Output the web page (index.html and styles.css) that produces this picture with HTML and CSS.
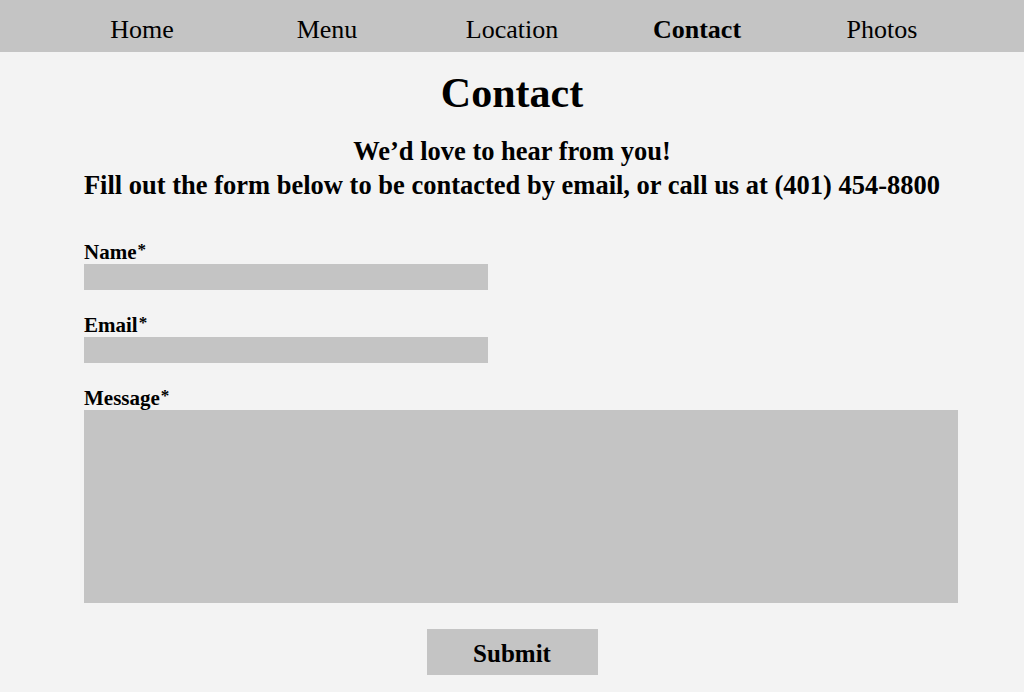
FILE: index.html
```html
<!DOCTYPE html>
<html lang="en">
<head>
<meta charset="utf-8">
<title>Contact</title>
<link rel="stylesheet" href="styles.css">
</head>
<body>
<nav class="nav">
  <ul class="nav-list">
    <li class="nav-item">Home</li>
    <li class="nav-item">Menu</li>
    <li class="nav-item">Location</li>
    <li class="nav-item nav-item-active">Contact</li>
    <li class="nav-item">Photos</li>
  </ul>
</nav>
<main class="main">
  <h1 class="title">Contact</h1>
  <p class="intro">We’d love to hear from you!<br>Fill out the form below to be contacted by email, or call us at (401) 454-8800</p>
  <form class="form">
    <div class="field">
      <label class="label">Name<span class="req">*</span></label>
      <div class="input"></div>
    </div>
    <div class="field">
      <label class="label">Email<span class="req">*</span></label>
      <div class="input"></div>
    </div>
    <div class="field">
      <label class="label">Message<span class="req">*</span></label>
      <div class="textarea"></div>
    </div>
    <div class="actions">
      <div class="submit">Submit</div>
    </div>
  </form>
</main>
</body>
</html>
```
FILE: styles.css
```css
html, body {
  margin: 0;
  padding: 0;
}
body {
  background: #f3f3f3;
  color: #000;
  font-family: "Liberation Serif", "Times New Roman", serif;
  width: 1024px;
  height: 692px;
  overflow: hidden;
}
.nav {
  background: #c4c4c4;
  height: 52px;
  box-sizing: border-box;
  padding-top: 8px;
}
.nav-list {
  list-style: none;
  margin: 0 auto;
  padding: 0;
  width: 925px;
  display: flex;
}
.nav-item {
  flex: 1;
  text-align: center;
  font-size: 26px;
  line-height: 44px;
}
.nav-item-active {
  font-weight: bold;
}
.main {
  width: 1024px;
}
.title {
  margin: 16px 0 0 0;
  font-size: 42px;
  line-height: 50px;
  text-align: center;
  font-weight: bold;
}
.intro {
  margin: 16px 0 0 0;
  font-size: 26.5px;
  line-height: 34px;
  font-weight: bold;
  text-align: center;
  white-space: nowrap;
}
.form {
  margin-top: 38px;
  display: flex;
  flex-direction: column;
  gap: 23px;
}
.field {
  display: flex;
  flex-direction: column;
  margin-left: 84px;
}
.label {
  font-size: 21px;
  line-height: 24px;
  font-weight: bold;
}
.req {
  font-size: 17px;
  vertical-align: 4px;
  line-height: 0;
  margin-left: 1px;
}
.input {
  width: 404px;
  height: 26px;
  background: #c4c4c4;
}
.textarea {
  width: 874px;
  height: 193px;
  background: #c4c4c4;
}
.actions {
  display: flex;
  justify-content: center;
  margin-top: 3px;
}
.submit {
  width: 171px;
  height: 46px;
  box-sizing: border-box;
  padding-top: 4px;
  background: #c4c4c4;
  font-size: 25px;
  line-height: 42px;
  font-weight: bold;
  text-align: center;
}
```
